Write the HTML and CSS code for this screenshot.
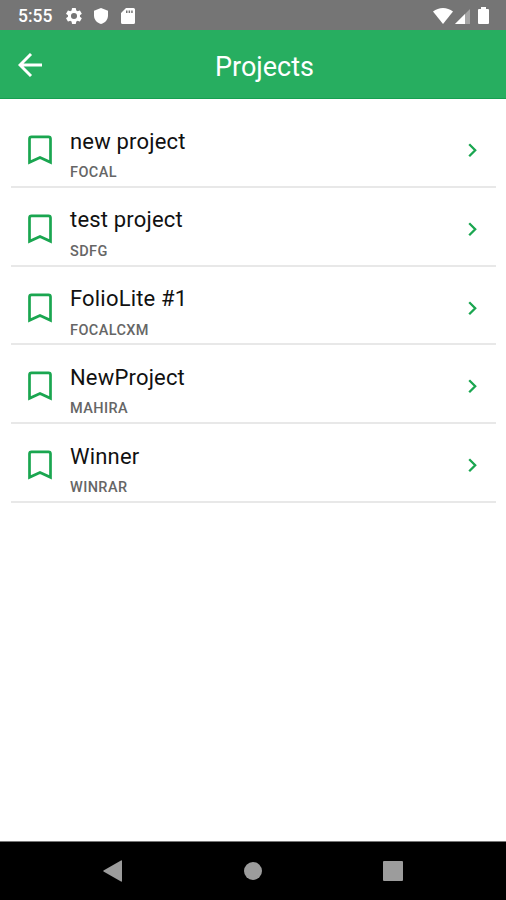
FILE: index.html
```
<!DOCTYPE html>
<html lang="en">
<head>
    <meta charset="UTF-8">
    <title>Projects</title>
    <link rel="stylesheet" href="styles.css">
</head>
<body>
    <!-- Shared icons for the list rows -->
    <svg class="sprite" aria-hidden="true">
        <symbol id="bookmark" viewBox="0 0 24 30">
            <path d="M1.5 27.3V3.8Q1.5 1.8 3.5 1.8H20.5Q22.5 1.8 22.5 3.8V27.3L12 22.6Z" fill="none" stroke="currentColor" stroke-width="2.7"/>
        </symbol>
        <symbol id="chevron" viewBox="0 0 10 16">
            <path d="M1.2 2.2L7.2 8.2L1.2 14.2" fill="none" stroke="currentColor" stroke-width="2.3"/>
        </symbol>
    </svg>

    <div class="status-bar">
        <span class="time">5:55</span>
        <svg class="gear" viewBox="2 2 20 20"><path fill-rule="evenodd" d="M19.4 13a7.5 7.5 0 0 0 0-2l2.1-1.6a.5.5 0 0 0 .1-.6l-2-3.5a.5.5 0 0 0-.6-.2l-2.5 1a7.3 7.3 0 0 0-1.7-1l-.4-2.6a.5.5 0 0 0-.5-.5h-4a.5.5 0 0 0-.5.5L9 5.1a7.3 7.3 0 0 0-1.7 1l-2.5-1a.5.5 0 0 0-.6.2l-2 3.5a.5.5 0 0 0 .1.6L4.5 11a7.5 7.5 0 0 0 0 2l-2.2 1.6a.5.5 0 0 0-.1.6l2 3.5c.1.2.4.3.6.2l2.5-1c.5.4 1.1.7 1.7 1l.4 2.6c0 .3.2.5.5.5h4c.3 0 .5-.2.5-.5l.4-2.6c.6-.3 1.2-.6 1.7-1l2.5 1c.2.1.5 0 .6-.2l2-3.5a.5.5 0 0 0-.1-.6zM12 8.2a3.8 3.8 0 1 1 0 7.6a3.8 3.8 0 0 1 0-7.6z"/></svg>
        <svg class="shield" viewBox="0 0 14 16"><path d="M7 0L14 2.7V7.5C14 11.5 11 15 7 16C3 15 0 11.5 0 7.5V2.7Z"/></svg>
        <svg class="sd-card" viewBox="0 0 14 16"><path fill-rule="evenodd" d="M5 0H12.5Q14 0 14 1.5V14.5Q14 16 12.5 16H1.5Q0 16 0 14.5V5ZM5 2.5V5H6.5V2.5ZM7.6 2.5V5H9.1V2.5ZM10.2 2.5V5H11.7V2.5Z"/></svg>
        <div class="signals">
            <svg class="wifi" viewBox="0 0 20 16"><path d="M0 3.5Q4.5 0 10 0T20 3.5L10 16Z"/></svg>
            <svg class="cell" viewBox="0 0 15 15"><path d="M15 0V15H0Z" opacity=".35"/><path d="M10 5V15H0Z"/></svg>
            <svg class="battery" viewBox="0 0 11 17"><path d="M3 0H8V2H10Q11 2 11 3V16Q11 17 10 17H1Q0 17 0 16V3Q0 2 1 2H3Z"/></svg>
        </div>
    </div>

    <div class="header">
        <svg class="back" viewBox="0 0 24 24"><path d="M24 12H2M13 1L2 12L13 23" fill="none" stroke="#fff" stroke-width="2.9"/></svg>
        <h1>Projects</h1>
    </div>

    <div class="projects">
        <div class="project">
            <svg class="bookmark"><use href="#bookmark"/></svg>
            <div class="info">
                <p class="name">new project</p>
                <p class="code">FOCAL</p>
            </div>
            <svg class="chevron"><use href="#chevron"/></svg>
        </div>
        <div class="project">
            <svg class="bookmark"><use href="#bookmark"/></svg>
            <div class="info">
                <p class="name">test project</p>
                <p class="code">SDFG</p>
            </div>
            <svg class="chevron"><use href="#chevron"/></svg>
        </div>
        <div class="project">
            <svg class="bookmark"><use href="#bookmark"/></svg>
            <div class="info">
                <p class="name">FolioLite #1</p>
                <p class="code">FOCALCXM</p>
            </div>
            <svg class="chevron"><use href="#chevron"/></svg>
        </div>
        <div class="project">
            <svg class="bookmark"><use href="#bookmark"/></svg>
            <div class="info">
                <p class="name">NewProject</p>
                <p class="code">MAHIRA</p>
            </div>
            <svg class="chevron"><use href="#chevron"/></svg>
        </div>
        <div class="project">
            <svg class="bookmark"><use href="#bookmark"/></svg>
            <div class="info">
                <p class="name">Winner</p>
                <p class="code">WINRAR</p>
            </div>
            <svg class="chevron"><use href="#chevron"/></svg>
        </div>
    </div>

    <div class="nav-bar">
        <svg class="nav-back" viewBox="0 0 19 22"><path d="M19 1V21Q19 22 18 21.5L0.5 11.5Q0 11 0.5 10.5L18 .5Q19 0 19 1Z"/></svg>
        <div class="nav-home"></div>
        <div class="nav-recent"></div>
    </div>
</body>
</html>
```

FILE: styles.css
```
* {
    box-sizing: border-box;
}

body {
    margin: 0;
    height: 100vh;
    display: flex;
    flex-direction: column;
    background-color: #fff;
    font-family: Roboto, sans-serif;
}

.sprite {
    position: absolute;
    width: 0;
    height: 0;
}

.status-bar {
    height: 30px;
    padding: 1px 17px 0 18px;
    display: flex;
    align-items: center;
    background-color: #757575;
    color: #fff;
    fill: #fff;
}

.time {
    width: 48px;
    font-size: 17.5px;
    font-weight: 500;
}

.gear {
    width: 16px;
    height: 16px;
}

.shield {
    width: 14px;
    height: 16px;
    margin-left: 12px;
}

.sd-card {
    width: 14px;
    height: 16px;
    margin-left: 13px;
}

.signals {
    display: flex;
    align-items: center;
    margin-left: auto;
}

.wifi {
    width: 20px;
    height: 16px;
}

.cell {
    width: 15px;
    height: 15px;
    margin: 1px 8px 0 2px;
}

.battery {
    width: 11px;
    height: 17px;
}

.header {
    height: 69px;
    padding: 1px 18px 0;
    display: grid;
    grid-template-columns: 24px 1fr 24px;
    align-items: center;
    background-color: #27ae60;
    border-bottom: 1px solid #159f50;
}

.back {
    width: 24px;
    height: 24px;
}

h1 {
    margin: 4px 0 0;
    padding-left: 23px;
    color: #fff;
    font-size: 27px;
    font-weight: 400;
    line-height: 32px;
    text-align: center;
}

.projects {
    flex: 1;
    padding: 10px 10px 0 11px;
}

.project {
    height: 78.75px;
    padding: 0 18px 0 17px;
    display: flex;
    align-items: flex-start;
    border-bottom: 2px solid #e8e8e8;
    color: #1aa650;
}

.bookmark {
    width: 24px;
    height: 30px;
    margin-top: 26px;
}

.info {
    flex: 1;
    padding: 19.5px 0 0 18px;
}

.name {
    margin: 0;
    color: #111;
    font-size: 22px;
    line-height: 26px;
    letter-spacing: 0.18px;
}

.code {
    margin: 9.5px 0 0;
    color: #666;
    font-size: 14.5px;
    font-weight: 500;
    line-height: 18px;
    letter-spacing: 0.4px;
}

.chevron {
    width: 10px;
    height: 16px;
    margin-top: 33px;
}

.nav-bar {
    height: 59px;
    display: flex;
    align-items: center;
    padding-left: 103px;
    background-color: #000;
    border-top: 1px solid #777;
}

.nav-back {
    width: 19px;
    height: 22px;
    fill: #9c9c9c;
}

.nav-home {
    width: 18px;
    height: 18px;
    margin-left: 122px;
    border-radius: 50%;
    background-color: #9c9c9c;
}

.nav-recent {
    width: 20px;
    height: 20px;
    margin-left: 121px;
    border-radius: 1px;
    background-color: #9c9c9c;
}
```
